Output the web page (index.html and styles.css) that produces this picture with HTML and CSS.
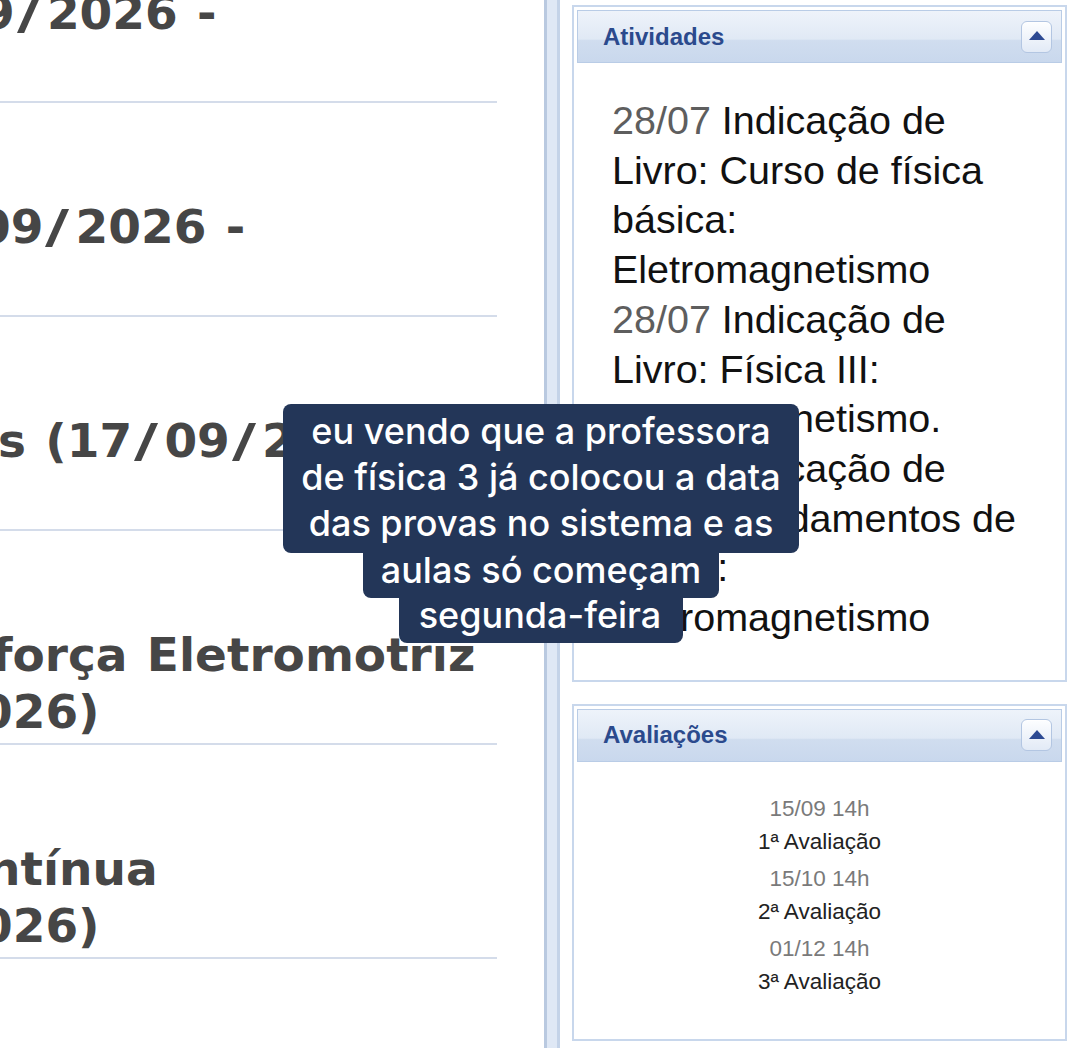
FILE: index.html
```html
<!DOCTYPE html>
<html>
<head>
    <title>Turma - Tópicos de Aula</title>
    <link rel="stylesheet" href="styles.css">
</head>
<body>
    <div class="page">
        <div class="topics">
            <div class="topic">
                <div class="topic-line shift-a">9<span class="slash">/</span>2026 -</div>
                <div class="topic-line">&nbsp;</div>
            </div>
            <div class="topic">
                <div class="topic-line shift-b">09<span class="slash">/</span>2026 -</div>
                <div class="topic-line">&nbsp;</div>
            </div>
            <div class="topic">
                <div class="topic-line shift-c">s (17<span class="slash">/</span>09<span class="slash">/</span>2026 -</div>
                <div class="topic-line">&nbsp;</div>
            </div>
            <div class="topic">
                <div class="topic-line shift-d">força Eletromotriz</div>
                <div class="topic-line shift-e">026)</div>
            </div>
            <div class="topic">
                <div class="topic-line shift-f">ntínua</div>
                <div class="topic-line shift-e">026)</div>
            </div>
        </div>

        <div class="divider"></div>

        <div class="sidebar">
            <div class="panel">
                <div class="panel-header">
                    <span class="panel-title">Atividades</span>
                    <button class="panel-toggle"><span class="arrow-up"></span></button>
                </div>
                <div class="panel-body activities">
                    <div class="activity"><span class="activity-date">28/07</span> Indicação de Livro: Curso de física básica: Eletromagnetismo</div>
                    <div class="activity"><span class="activity-date">28/07</span> Indicação de Livro: Física III: Eletromagnetismo.</div>
                    <div class="activity"><span class="activity-date">28/07</span> Indicação de Livro: Fundamentos de Física: Eletromagnetismo</div>
                </div>
            </div>

            <div class="panel panel-exams">
                <div class="panel-header">
                    <span class="panel-title">Avaliações</span>
                    <button class="panel-toggle"><span class="arrow-up"></span></button>
                </div>
                <div class="panel-body exams">
                    <div class="exam">
                        <div class="exam-date">15/09 14h</div>
                        <div class="exam-name">1ª Avaliação</div>
                    </div>
                    <div class="exam">
                        <div class="exam-date">15/10 14h</div>
                        <div class="exam-name">2ª Avaliação</div>
                    </div>
                    <div class="exam">
                        <div class="exam-date">01/12 14h</div>
                        <div class="exam-name">3ª Avaliação</div>
                    </div>
                </div>
            </div>
        </div>

        <!-- legenda do vídeo por cima da tela -->
        <div class="caption">
            <div class="caption-block caption-main">
                eu vendo que a professora<br>
                de física 3 já colocou a data<br>
                das provas no sistema e as
            </div>
            <div class="caption-block caption-tail">aulas só começam</div>
            <div class="caption-block caption-tail caption-last">segunda-feira</div>
        </div>
    </div>
</body>
</html>
```

FILE: styles.css
```css
html, body {
    margin: 0;
    padding: 0;
    background: #fff;
}
body {
    width: 1080px;
    height: 1048px;
    overflow: hidden;
}
.page {
    position: relative;
    display: flex;
    height: 1048px;
}

/* coluna de tópicos (cortada à esquerda) */
.topics {
    width: 497px;
    flex-shrink: 0;
    overflow: hidden;
    margin-top: -111px;
    font-family: "DejaVu Sans", Verdana, sans-serif;
    font-weight: bold;
    font-size: 47px;
    line-height: 57px;
    word-spacing: 3px;
    color: #464646;
}
.topic {
    padding: 95px 0 3px 0;
    border-bottom: 2px solid #d4dcea;
}
.topic-line {
    white-space: nowrap;
}
/* barra larga como a da Verdana */
.slash {
    display: inline-block;
    padding: 0 9px 0 6px;
    transform: scaleX(1.4);
}
.shift-a { margin-left: -18px; }
.shift-b { margin-left: -22px; }
.shift-c { margin-left: -2px; }
.shift-d { margin-left: -8px; }
.shift-e { margin-left: -20px; }
.shift-f { margin-left: -13px; }

.divider {
    width: 10px;
    flex-shrink: 0;
    margin-left: 47px;
    border-left: 3px solid #b9c9e0;
    border-right: 3px solid #c4d3e8;
    background: #dfe8f5;
}

/* painéis laterais */
.sidebar {
    width: 495px;
    flex-shrink: 0;
    margin-left: 12px;
    font-family: "Liberation Sans", Arial, sans-serif;
}
.panel {
    margin-top: 5px;
    border: 2px solid #c8d7ec;
    padding: 3px;
    background: #fff;
}
.panel-exams {
    margin-top: 22px;
}
.panel-header {
    display: flex;
    align-items: center;
    justify-content: space-between;
    height: 51px;
    border: 1px solid #b9cce6;
    background: linear-gradient(#eef3fa 0%, #e0e9f5 55%, #d0ddef 58%, #c9d8ed 100%);
    padding: 0 9px 0 25px;
}
.panel-title {
    font-size: 24px;
    font-weight: bold;
    color: #2b4a8d;
}
.panel-toggle {
    width: 31px;
    height: 32px;
    padding: 0;
    border: 1px solid #b3c6e2;
    border-radius: 6px;
    background: linear-gradient(#fdfeff, #e2eaf6);
    box-shadow: inset 0 1px 0 #fff;
    display: flex;
    align-items: center;
    justify-content: center;
}
.arrow-up {
    width: 0;
    height: 0;
    border-left: 8px solid transparent;
    border-right: 8px solid transparent;
    border-bottom: 9px solid #2d4a93;
    margin-top: -2px;
}

.activities {
    padding: 33px 20px 34px 35px;
    font-size: 39.5px;
    line-height: 49.7px;
    color: #111;
}
.activity-date {
    color: #5e5e5e;
}

.exams {
    display: flex;
    flex-direction: column;
    gap: 4px;
    padding: 30px 0 38px 0;
    text-align: center;
    font-size: 22.5px;
    line-height: 33px;
}
.exam-date {
    color: #7a7a7a;
}
.exam-name {
    color: #222;
}

/* legenda estilo vídeo */
.caption {
    position: absolute;
    top: 404px;
    left: 0;
    width: 1082px;
    display: flex;
    flex-direction: column;
    align-items: center;
    font-family: Inter, "Open Sans", sans-serif;
    font-weight: 500;
    font-size: 36px;
    color: #fff;
    text-align: center;
}
.caption-block {
    background: #233658;
    padding: 0 18px;
}
.caption-main {
    line-height: 46px;
    padding: 4px 18px 7px;
    border-radius: 8px;
}
.caption-tail {
    line-height: 34px;
    padding-bottom: 11px;
    border-radius: 0 0 8px 8px;
}
.caption-last {
    padding-left: 20px;
    padding-right: 22px;
}
```
